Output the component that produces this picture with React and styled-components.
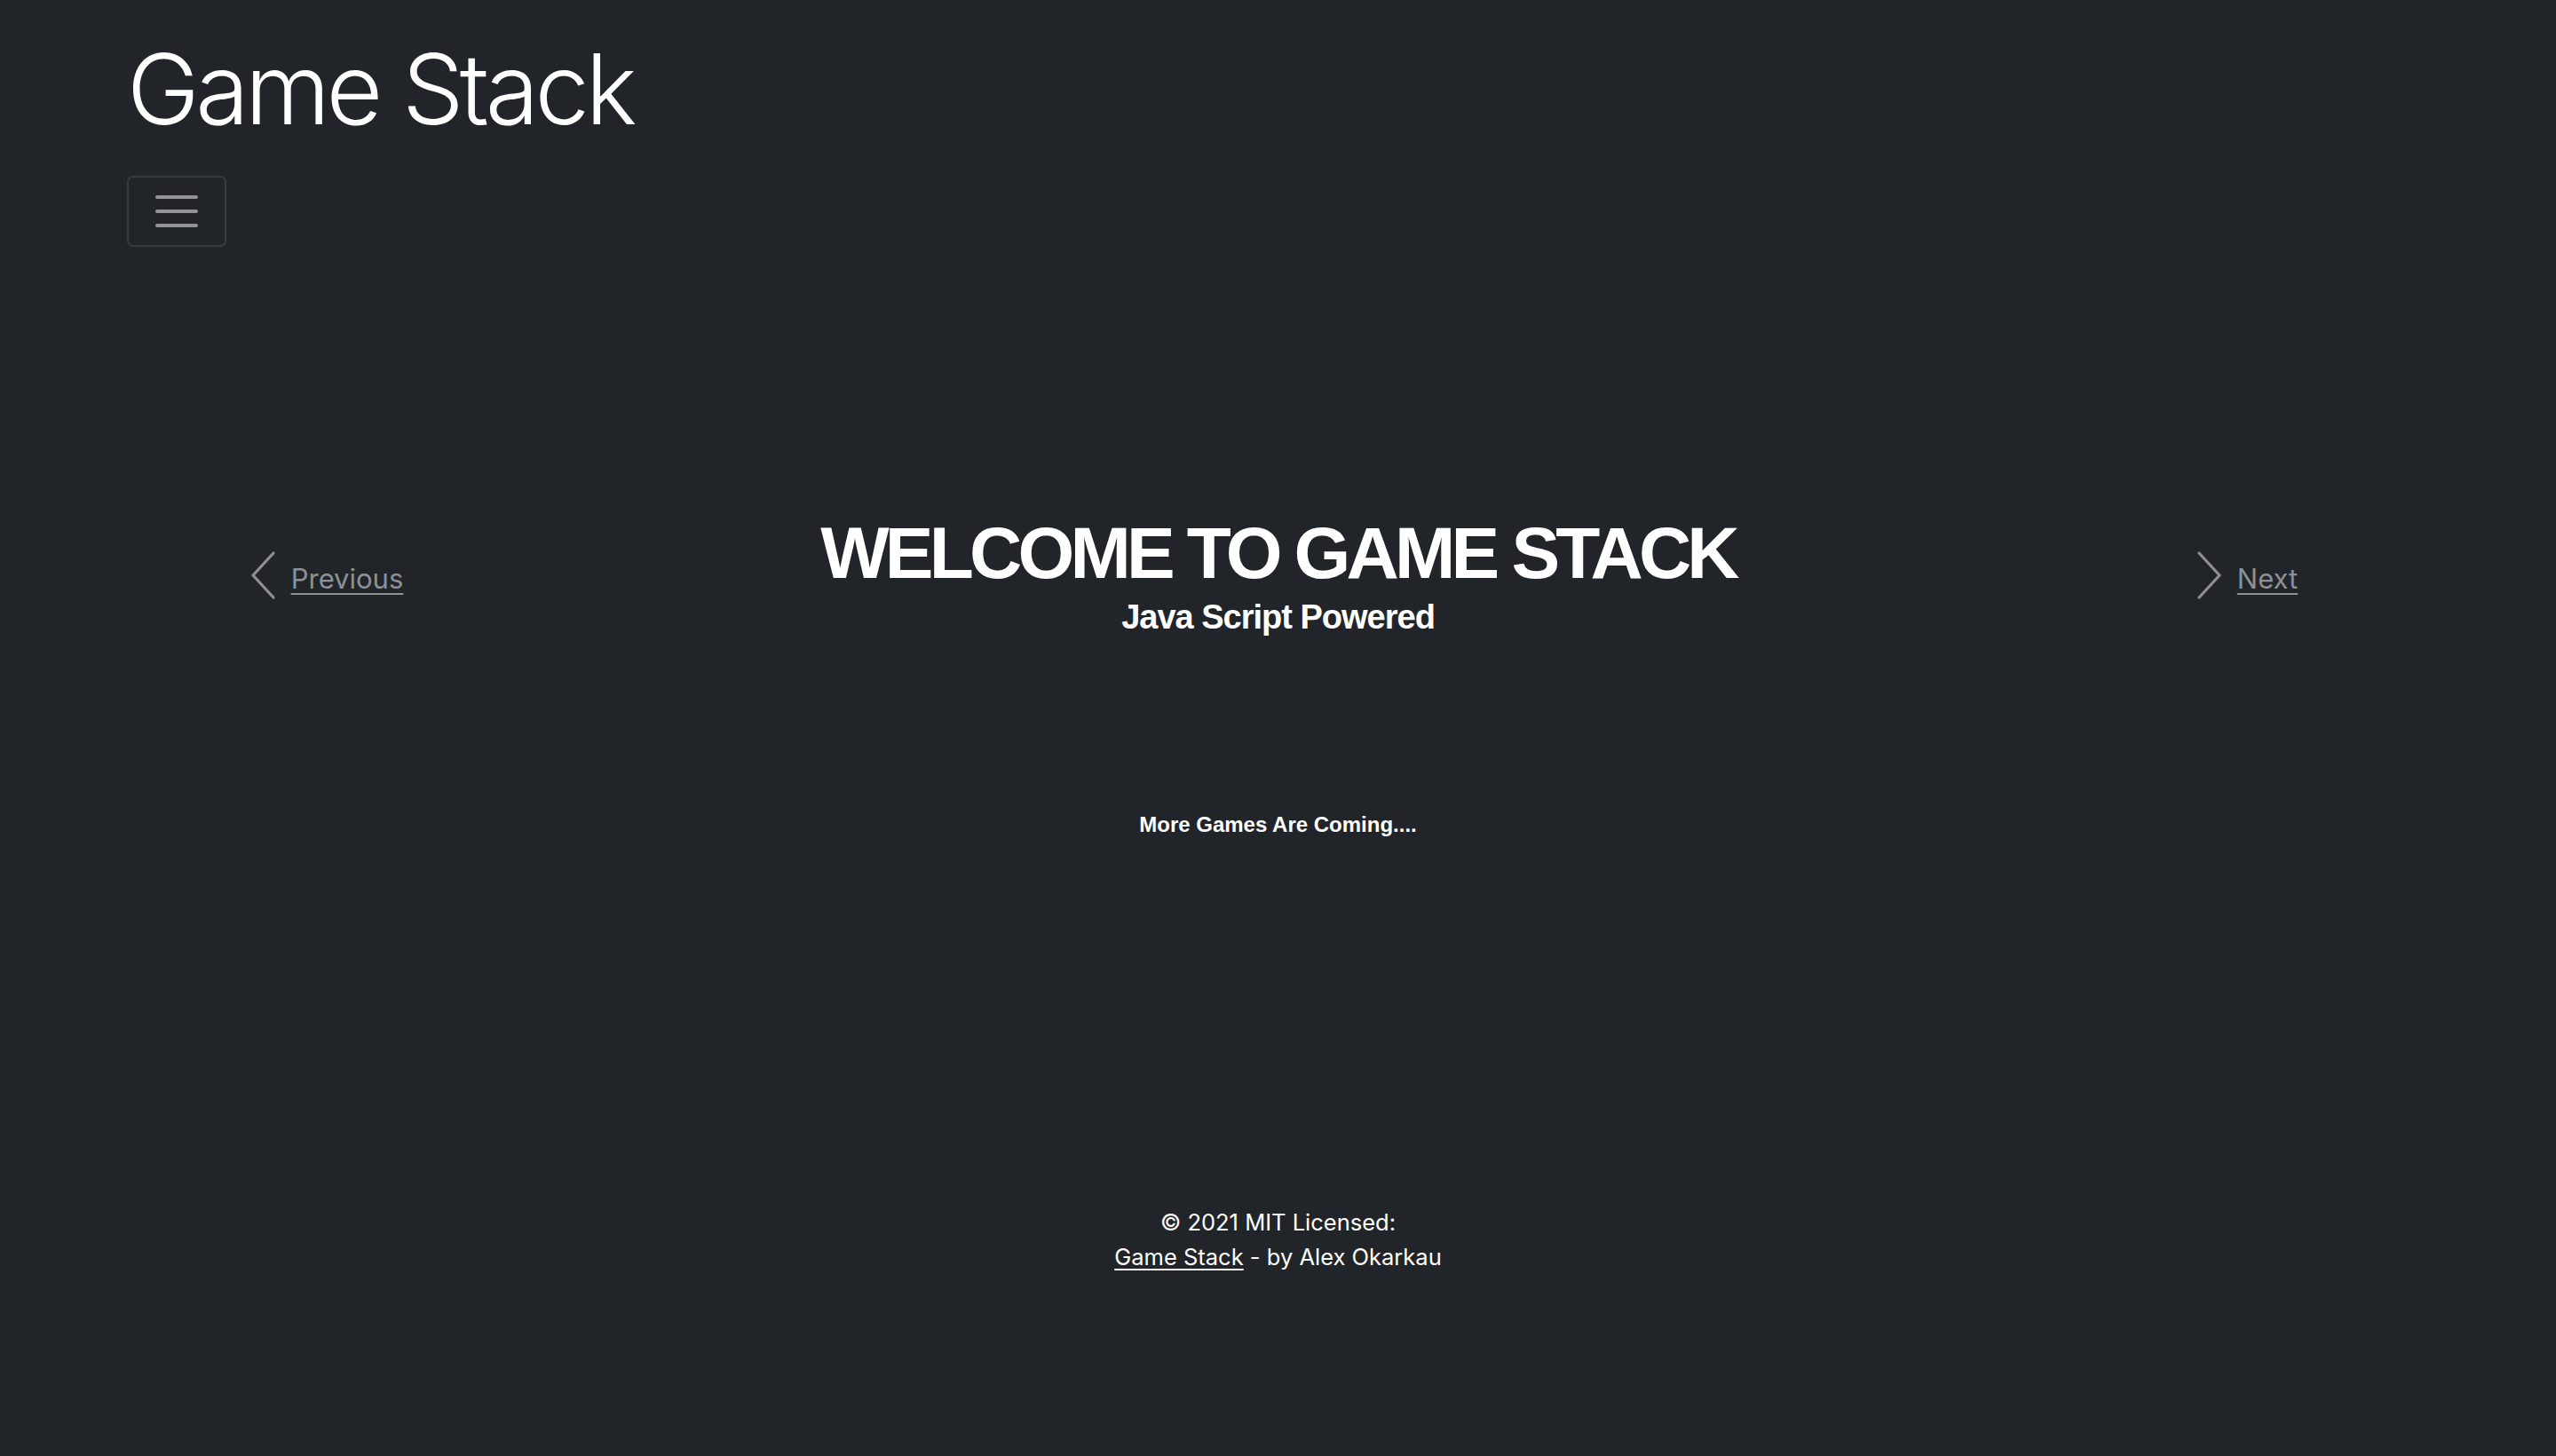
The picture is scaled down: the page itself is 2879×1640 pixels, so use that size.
import React from "react";
import styled, { createGlobalStyle } from "styled-components";

const GlobalStyle = createGlobalStyle`
  html, body {
    margin: 0;
    padding: 0;
    background: #212529;
  }
  body {
    font-family: Inter, "Liberation Sans", sans-serif;
    color: #ffffff;
  }
`;

function Chevron({ dir }) {
  const d = dir === "left" ? "M26 2 L3 27 L26 52" : "M3 2 L26 27 L3 52";
  return (
    <svg width="29" height="54" viewBox="0 0 29 54" fill="none">
      <path d={d} stroke="#8e9093" strokeWidth="3.2" strokeLinecap="round" strokeLinejoin="round" />
    </svg>
  );
}

function App() {
  return (
    <>
      <GlobalStyle />
      <Page>
        <Header>
          <Brand>Game Stack</Brand>
          <Toggler aria-label="menu">
            <Bar />
            <Bar />
            <Bar />
          </Toggler>
        </Header>

        <Carousel>
          <Control href="#" $side="left">
            <Chevron dir="left" />
            <ControlLabel>Previous</ControlLabel>
          </Control>
          <Slide>
            <Welcome>WELCOME TO GAME STACK</Welcome>
            <Tagline>Java Script Powered</Tagline>
          </Slide>
          <Control href="#" $side="right">
            <Chevron dir="right" />
            <ControlLabel>Next</ControlLabel>
          </Control>
        </Carousel>

        <Coming>More Games Are Coming....</Coming>

        <Footer>
          <div>© 2021 MIT Licensed:</div>
          <div>
            <FooterLink href="#">Game Stack</FooterLink> - by Alex Okarkau
          </div>
        </Footer>
      </Page>
    </>
  );
}

export default App;

const Page = styled.div`
  min-height: 1640px;
  box-sizing: border-box;
  display: flex;
  flex-direction: column;
  background: #212529;
`;

const Header = styled.header`
  padding: 32px 143px 0;
  display: flex;
  flex-direction: column;
  align-items: flex-start;
`;

const Brand = styled.h1`
  margin: 0;
  font-family: Inter, "Liberation Sans", sans-serif;
  font-weight: 300;
  font-size: 110px;
  line-height: 136px;
  letter-spacing: -4.6px;
  color: #ffffff;
`;

const Toggler = styled.button`
  margin-top: 30px;
  width: 112px;
  height: 80px;
  box-sizing: border-box;
  background: transparent;
  border: 2px solid #373b40;
  border-radius: 7px;
  display: flex;
  flex-direction: column;
  align-items: center;
  justify-content: center;
  gap: 12px;
  padding: 0;
`;

const Bar = styled.span`
  display: block;
  width: 48px;
  height: 4px;
  border-radius: 2px;
  background: #919396;
`;

const Carousel = styled.section`
  margin-top: 300px;
  display: grid;
  grid-template-columns: 450px 1fr 450px;
  align-items: center;
  padding: 0 143px;
`;

const Control = styled.a`
  display: flex;
  align-items: center;
  justify-content: center;
  gap: 17px;
  padding-left: ${(p) => (p.$side === "right" ? "40px" : "0")};
  color: #8e9093;
  text-decoration: none;
`;

const ControlLabel = styled.span`
  font-family: Inter, "Liberation Sans", sans-serif;
  font-size: 31px;
  text-decoration: underline;
  text-underline-offset: 5px;
  text-decoration-thickness: 2px;
  padding-top: 6px;
`;

const Slide = styled.div`
  display: flex;
  flex-direction: column;
  align-items: center;
  text-align: center;
`;

const Welcome = styled.h2`
  margin: 0;
  font-family: "Liberation Sans", Arial, sans-serif;
  font-weight: 700;
  font-size: 82px;
  line-height: 90px;
  letter-spacing: -4.8px;
  color: #ffffff;
`;

const Tagline = styled.h5`
  margin: 4px 0 0;
  font-family: "Liberation Sans", Arial, sans-serif;
  font-weight: 700;
  font-size: 38px;
  line-height: 46px;
  letter-spacing: -1px;
  color: #ffffff;
`;

const Coming = styled.p`
  margin: 197px 0 0;
  text-align: center;
  font-family: "Liberation Sans", Arial, sans-serif;
  font-weight: 700;
  font-size: 24px;
  color: #ffffff;
`;

const Footer = styled.footer`
  margin-top: 414px;
  text-align: center;
  font-family: Inter, "Liberation Sans", sans-serif;
  font-size: 25.5px;
  line-height: 39px;
  color: #ffffff;
`;

const FooterLink = styled.a`
  color: #ffffff;
  text-decoration: underline;
  text-underline-offset: 4px;
  text-decoration-thickness: 2px;
`;
